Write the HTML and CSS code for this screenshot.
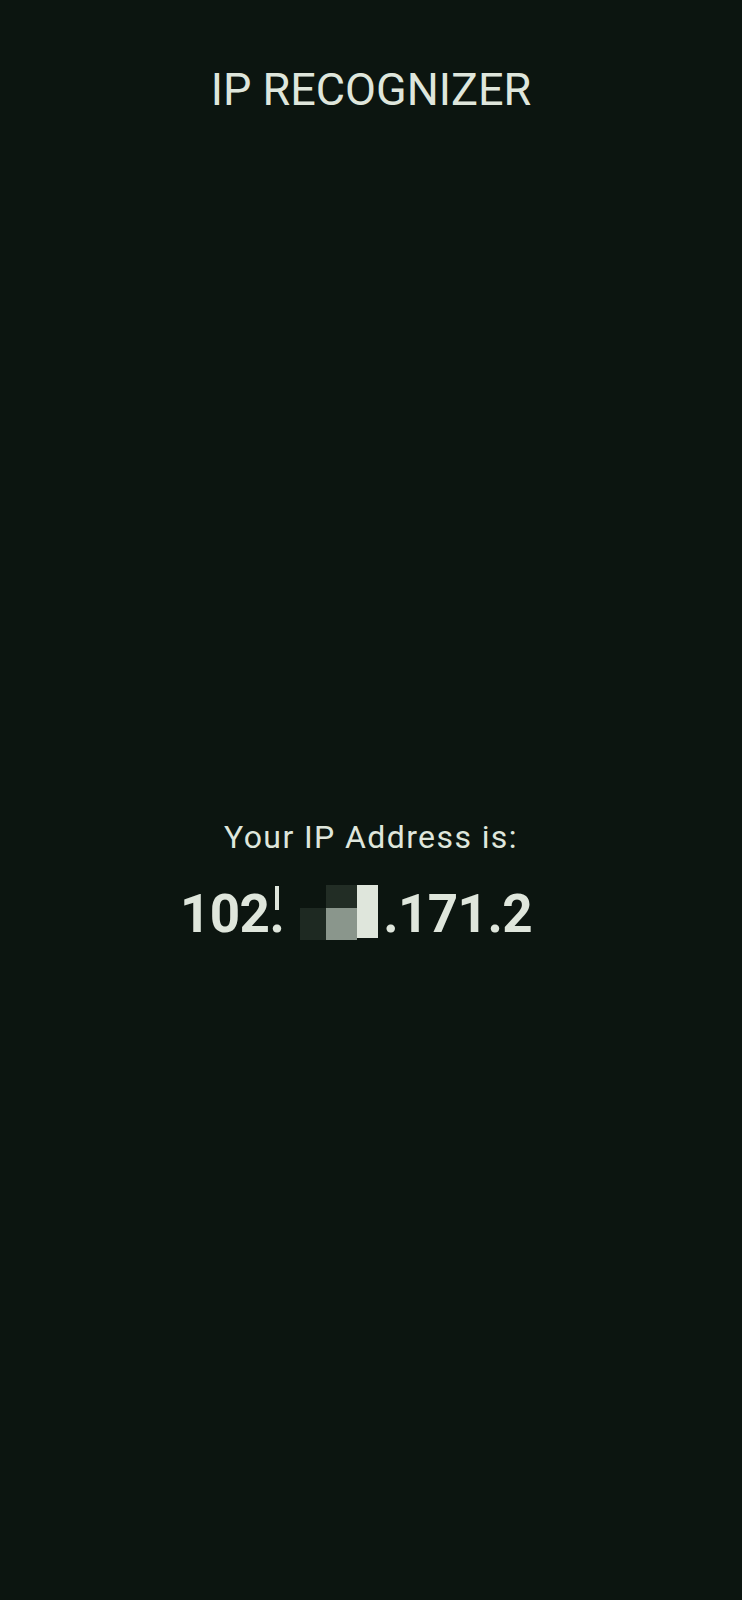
FILE: index.html
```html
<!DOCTYPE html>
<html lang="en">
<head>
<meta charset="utf-8">
<title>IP Recognizer</title>
<link rel="stylesheet" href="styles.css">
</head>
<body>
<div class="screen">
  <header class="topbar">
    <h1 class="title">IP RECOGNIZER</h1>
  </header>
  <main class="content">
    <p class="label">Your IP Address is:</p>
    <p class="ip"><span>102.</span><span class="redact"><span class="tick"></span><span class="b1"></span><span class="b2"></span><span class="b3"></span></span><span>.171.2</span></p>
  </main>
</div>
</body>
</html>
```
FILE: styles.css
```css
html, body {
  margin: 0;
  padding: 0;
  background: #0c1510;
}
.screen {
  width: 742px;
  height: 1600px;
  display: flex;
  flex-direction: column;
  font-family: Roboto, "Liberation Sans", sans-serif;
  color: #dfe6dc;
}
.topbar {
  display: flex;
  justify-content: center;
  padding-top: 62px;
}
.title {
  margin: 0;
  font-size: 45px;
  font-weight: 400;
  line-height: 56px;
}
.content {
  display: flex;
  flex-direction: column;
  align-items: center;
  padding-top: 699px;
}
.label {
  margin: 0;
  font-size: 32px;
  line-height: 40px;
  letter-spacing: 1.4px;
}
.ip {
  margin: 25px 0 0;
  padding-right: 30px;
  font-size: 53px;
  font-weight: 700;
  line-height: 64px;
  letter-spacing: -0.6px;
  white-space: nowrap;
}
.redact {
  position: relative;
  display: inline-flex;
  align-items: flex-end;
  vertical-align: -8px;
  height: 55px;
  padding-left: 16px;
  margin-right: 5px;
}
.tick {
  position: absolute;
  left: -9px;
  top: 1px;
  width: 4px;
  height: 24px;
  background: #dfe6dc;
}
.b1 { width: 26px; height: 32px; background: #1e2922; }
.b2 { width: 31px; height: 55px; background: linear-gradient(#222d25 0 42%, #8a968c 42%); }
.b3 { align-self: flex-start; width: 21px; height: 53px; background: #dfe6dc; }
```
